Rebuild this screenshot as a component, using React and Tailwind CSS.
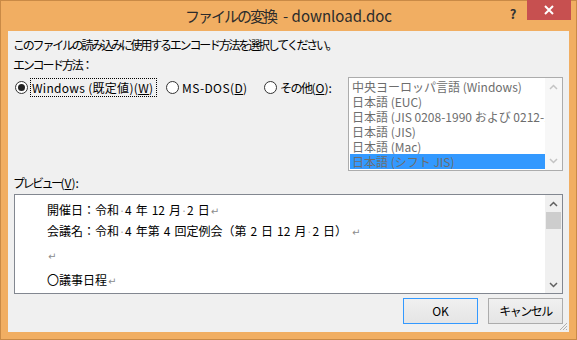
import React from 'react';

const UI_FONT = '"Noto Sans CJK JP", "Noto Sans", sans-serif';

const listItems = [
  '中央ヨーロッパ言語 (Windows)',
  '日本語 (EUC)',
  '日本語 (JIS 0208-1990 および 0212-1990)',
  '日本語 (JIS)',
  '日本語 (Mac)',
  '日本語 (シフト JIS)',
];

const Radio = ({ checked }) => (
  <span className="w-[13px] h-[13px] rounded-full border border-[#333] bg-white flex items-center justify-center shrink-0">
    {checked && <span className="w-[7px] h-[7px] rounded-full bg-[#222]" />}
  </span>
);

// Word の編集記号（スペースの点と段落記号）
const Sp = () => (
  <span className="inline-block w-[6px] text-center text-[#a0a0a0] text-[10px]">·</span>
);
const Gap = () => <span className="inline-block w-[4px]" />;
const Ret = () => (
  <span className="text-[#8c8c8c] text-[10px] ml-[1px]" style={{ fontFamily: '"DejaVu Sans", sans-serif' }}>
    ↵
  </span>
);

const ChevronUp = ({ color = '#606060' }) => (
  <svg width="9" height="6" viewBox="0 0 9 6">
    <path d="M1 5 L4.5 1.5 L8 5" fill="none" stroke={color} strokeWidth="1.5" />
  </svg>
);
const ChevronDown = ({ color = '#606060' }) => (
  <svg width="9" height="6" viewBox="0 0 9 6">
    <path d="M1 1 L4.5 4.5 L8 1" fill="none" stroke={color} strokeWidth="1.5" />
  </svg>
);

export default function App() {
  return (
    <div
      className="w-[577px] h-[340px] bg-[#f1ae62] border border-[#c98a46] flex flex-col"
      style={{ fontFamily: UI_FONT }}
    >
      {/* TITLE BAR */}
      <div className="h-[30px] grid grid-cols-[1fr_auto_1fr]">
        <div />
        <div className="text-[15px] leading-[30px] text-[#2b2b2b] flex">
          <span className="tracking-[-2px]">ファイルの変換</span>
          <span className="ml-[7px]">- download.doc</span>
        </div>
        <div className="flex justify-end items-start">
          <span className="w-[20px] mt-[3px] mr-[4px] text-center text-[13px] font-bold text-[#333]">?</span>
          <div className="w-[44px] h-[20px] mt-[-1px] mr-[5px] bg-[#c75050] flex items-center justify-center">
            <svg width="10" height="10" viewBox="0 0 10 10">
              <path d="M1 1 L9 9 M9 1 L1 9" stroke="#fff" strokeWidth="2" />
            </svg>
          </div>
        </div>
      </div>

      {/* CLIENT AREA */}
      <div className="relative flex-1 mx-[7px] mb-[7px] bg-[#f0f0f0] flex flex-col text-[12px] text-black">
        <div className="mt-[5px] pl-[5px] h-[18px] leading-[18px] tracking-[-2.2px]">
          このファイルの読み込みに使用するエンコード方法を選択してください。
        </div>
        <div className="mt-[2px] pl-[5px] h-[18px] leading-[18px] tracking-[-2.2px]">エンコード方法：</div>

        {/* RADIOS + LIST */}
        <div className="mt-[3px] flex pl-[7px] pr-[6px]">
          <div className="flex items-start h-[20px] mt-[1px]">
            <div className="flex items-center h-[19px]">
              <Radio checked />
              <span className="ml-[2px] h-[19px] w-[127px] border border-dotted border-black leading-[17px] pl-[1px] tracking-[0.3px]">
                Windows (既定値)(<span className="underline">W</span>)
              </span>
            </div>
            <div className="flex items-center h-[19px] ml-[9px]">
              <Radio />
              <span className="ml-[3px] w-[70px] leading-[17px] tracking-[0.4px]">
                MS-DOS(<span className="underline">D</span>)
              </span>
            </div>
            <div className="flex items-center h-[19px] ml-[12px]">
              <Radio />
              <span className="ml-[3px] leading-[17px]">
                <span className="tracking-[-1.5px]">その他</span>(<span className="underline">O</span>):
              </span>
            </div>
          </div>

          <div className="ml-auto w-[215px] h-[94px] border border-[#acacac] bg-white flex">
            <div className="flex-1 pt-[1px] pl-[1px] overflow-hidden">
              {listItems.map((item, i) => (
                <div
                  key={item}
                  className={`h-[15px] leading-[15px] pl-[2px] whitespace-nowrap overflow-hidden text-[#6d6d6d] ${
                    i === 5 ? 'bg-[#3399ff]' : ''
                  }`}
                >
                  {item}
                </div>
              ))}
            </div>
            <div className="w-[17px] bg-[#f7f7f7] flex flex-col items-center justify-between py-[6px]">
              <ChevronUp color="#c4c4c4" />
              <ChevronDown color="#c4c4c4" />
            </div>
          </div>
        </div>

        {/* PREVIEW */}
        <div className="mt-[3px] pl-[5px] h-[18px] leading-[18px]">
          <span className="tracking-[-2.5px]">プレビュー</span>(<span className="underline">V</span>):
        </div>
        <div className="mt-[2px] ml-[6px] w-[549px] h-[100px] border border-[#828790] bg-white flex">
          <div className="flex-1 pl-[32px] text-[12px] text-black overflow-hidden">
            <div className="mt-[5px] h-[20px] leading-[20px] whitespace-nowrap">
              開催日：令和<Sp />4<Gap />年<Gap />12<Gap />月<Sp />2<Gap />日<Ret />
            </div>
            <div className="mt-[1px] h-[20px] leading-[20px] whitespace-nowrap">
              会議名：令和<Sp />4<Gap />年第<Gap />4<Gap />回定例会（第<Gap />2<Gap />日<Gap />12<Gap />月<Sp />2<Gap />日）<Gap /><Ret />
            </div>
            <div className="mt-[4px] h-[20px] leading-[20px]">
              <Ret />
            </div>
            <div className="mt-[5px] h-[20px] leading-[20px] whitespace-nowrap">
              〇議事日程<Ret />
            </div>
          </div>
          <div className="w-[17px] bg-[#f0f0f0] flex flex-col items-center">
            <div className="h-[17px] flex items-center justify-center">
              <ChevronUp />
            </div>
            <div className="w-[15px] h-[17px] bg-[#cdcdcd]" />
            <div className="flex-1" />
            <div className="h-[17px] flex items-center justify-center">
              <ChevronDown />
            </div>
          </div>
        </div>

        {/* BUTTONS */}
        <div className="mt-[4px] flex justify-end gap-[10px] pr-[6px]">
          <button className="w-[75px] h-[26px] border border-[#3399ff] bg-gradient-to-b from-[#f0f0f0] to-[#e5e5e5] text-[12px] text-black">
            OK
          </button>
          <button className="w-[75px] h-[26px] border border-[#acacac] bg-gradient-to-b from-[#f0f0f0] to-[#e5e5e5] text-[12px] text-black tracking-[-1.5px]">
            キャンセル
          </button>
        </div>

        {/* RESIZE GRIP */}
        <svg className="absolute right-[1px] bottom-[1px]" width="9" height="9" viewBox="0 0 9 9">
          <path d="M8 1 L1 8 M8 4 L4 8 M8 7 L7 8" stroke="#b0b0b0" strokeWidth="1" />
        </svg>
      </div>
    </div>
  );
}
